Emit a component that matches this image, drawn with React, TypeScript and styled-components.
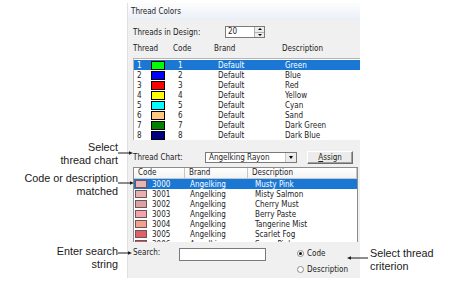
import React from 'react';
import styled, { createGlobalStyle } from 'styled-components';

const Global = createGlobalStyle`
  html, body { margin: 0; padding: 0; background: #fff; }
  body { width: 455px; height: 295px; overflow: hidden; }
`;

const uiFont = `"Liberation Sans Narrow", "DejaVu Sans Condensed", "Liberation Sans", Arial, sans-serif`;
const noteFont = `"Liberation Sans", Arial, sans-serif`;
const selBlue = '#1a78d4';

const Page = styled.div`
  position: relative;
  width: 455px;
  height: 295px;
  box-sizing: border-box;
  padding: 3px 0 0 127px;
  background: #fff;
`;

const Panel = styled.section`
  width: 233px;
  height: 275px;
  box-sizing: border-box;
  background: #f0f0f0;
  border-left: 1px solid #e0e0e0;
  display: flex;
  flex-direction: column;
  overflow: hidden;
  font-family: ${uiFont};
  font-size: 8px;
  color: #222;
`;

const TitleBar = styled.header`
  flex: 0 0 17px;
  display: flex;
  align-items: center;
  padding-left: 3px;
  background: linear-gradient(to bottom, #fdfdfe, #eaeff7);
`;

const DesignRow = styled.div`
  margin-top: 6px;
  height: 12px;
  padding-left: 5px;
  display: grid;
  grid-template-columns: 92px 40px;
  align-items: center;
  flex-shrink: 0;
`;

const SpinBox = styled.div`
  height: 12px;
  box-sizing: border-box;
  border: 1px solid #7a7a7a;
  background: #fff;
  display: flex;
`;

const SpinValue = styled.span`
  flex: 1;
  padding-left: 2px;
  line-height: 10px;
`;

const SpinButtons = styled.div`
  width: 9px;
  display: flex;
  flex-direction: column;
  border-left: 1px solid #b0b0b0;
  background: #ececec;
`;

const SpinHalf = styled.div<{ $down?: boolean }>`
  flex: 1;
  display: flex;
  align-items: center;
  justify-content: center;
  border-top: ${p => (p.$down ? '1px solid #b0b0b0' : 'none')};
  &::after {
    content: '';
    border-left: 2px solid transparent;
    border-right: 2px solid transparent;
    ${p => (p.$down ? 'border-top: 2px solid #000;' : 'border-bottom: 2px solid #000;')}
  }
`;

const ColumnHeader = styled.div`
  margin-top: 5px;
  height: 10px;
  padding-left: 5px;
  display: grid;
  grid-template-columns: 40px 41px 68px auto;
  align-items: center;
  flex-shrink: 0;
`;

const ThreadList = styled.div`
  margin: 5px 0 0 5px;
  width: 240px;
  height: 82px;
  box-sizing: border-box;
  border-top: 1px solid #b4b4b4;
  border-left: 1px solid #b4b4b4;
  padding-top: 1px;
  background: #fff;
  flex-shrink: 0;
`;

const ThreadRow = styled.div<{ $selected?: boolean }>`
  height: 10px;
  padding-left: 3px;
  display: grid;
  grid-template-columns: 14px 27px 40px 67px 1fr;
  align-items: center;
  background: ${p => (p.$selected ? selBlue : 'transparent')};
  color: ${p => (p.$selected ? '#fff' : '#222')};
`;

const Swatch = styled.span<{ $color: string; $w: number; $h: number; $border: string }>`
  display: block;
  width: ${p => p.$w}px;
  height: ${p => p.$h}px;
  box-sizing: border-box;
  border: 1px solid ${p => p.$border};
  background: ${p => p.$color};
`;

const ChartRow = styled.div`
  margin-top: 11px;
  height: 13px;
  padding-left: 5px;
  display: flex;
  align-items: center;
  flex-shrink: 0;
`;

const ChartLabel = styled.span`
  width: 72px;
`;

const Combo = styled.div`
  width: 92px;
  height: 11px;
  box-sizing: border-box;
  border: 1px solid #7a7a7a;
  background: #fff;
  display: flex;
  align-items: center;
`;

const ComboText = styled.span`
  flex: 1;
  padding-left: 3px;
`;

const ComboArrow = styled.span`
  width: 10px;
  height: 100%;
  display: flex;
  align-items: center;
  justify-content: center;
  background: #ececec;
  border-left: 1px solid #c8c8c8;
  &::after {
    content: '';
    border-left: 2.5px solid transparent;
    border-right: 2.5px solid transparent;
    border-top: 3px solid #000;
  }
`;

const AssignButton = styled.button`
  margin-left: 10px;
  width: 46px;
  height: 13px;
  padding: 0;
  box-sizing: border-box;
  font: inherit;
  color: #222;
  background: #ececec;
  border: 1px solid;
  border-color: #fff #6e6e6e #6e6e6e #fff;
  box-shadow: inset -1px -1px 0 #a0a0a0;
  line-height: 10px;
  u { text-decoration: underline; }
`;

const LowerList = styled.div`
  margin: 3px 2px 0 5px;
  height: 75px;
  box-sizing: border-box;
  border: 1px solid #8c8c8c;
  border-bottom: none;
  background: #fff;
  overflow: hidden;
  flex-shrink: 0;
`;

const ListHeader = styled.div`
  display: grid;
  grid-template-columns: 51px 63px 1fr;
  height: 11px;
`;

const HeaderCell = styled.div`
  box-sizing: border-box;
  padding-left: 4px;
  border-right: 1px solid #c6c6c6;
  border-bottom: 1px solid #c6c6c6;
  background: linear-gradient(to bottom, #ffffff, #f3f3f3);
  line-height: 10px;
`;

const ChartRowItem = styled.div<{ $selected?: boolean }>`
  height: 10px;
  display: grid;
  grid-template-columns: 18px 38px 65px 1fr;
  align-items: center;
  background: ${p => (p.$selected ? selBlue : 'transparent')};
  color: ${p => (p.$selected ? '#fff' : '#222')};
  & > span:first-child { margin-left: 1px; }
`;

const SearchArea = styled.div`
  flex: 1;
  display: grid;
  grid-template-columns: 46px 87px 1fr;
  align-items: start;
  padding: 5px 0 0 5px;
`;

const SearchLabel = styled.span`
  line-height: 12px;
`;

const SearchInput = styled.div`
  margin-top: 1px;
  height: 13px;
  box-sizing: border-box;
  border: 1px solid #7a7a7a;
  background: #fff;
`;

const RadioGroup = styled.div`
  margin-left: 31px;
  display: flex;
  flex-direction: column;
  gap: 4px;
`;

const RadioOption = styled.label`
  height: 12px;
  display: flex;
  align-items: center;
  gap: 3px;
`;

const RadioCircle = styled.span<{ $checked?: boolean }>`
  width: 7px;
  height: 7px;
  box-sizing: border-box;
  border-radius: 50%;
  border: 1px solid #8a8a8a;
  background: #fff;
  display: flex;
  align-items: center;
  justify-content: center;
  &::after {
    content: '';
    width: 3px;
    height: 3px;
    border-radius: 50%;
    background: ${p => (p.$checked ? '#111' : 'transparent')};
  }
`;

const Note = styled.div<{ $top: number; $left?: number; $right?: number }>`
  position: absolute;
  top: ${p => p.$top}px;
  ${p => (p.$left !== undefined ? `left: ${p.$left}px;` : '')}
  ${p => (p.$right !== undefined ? `right: ${p.$right}px; text-align: right;` : '')}
  font-family: ${noteFont};
  font-size: 10.8px;
  line-height: 13px;
  color: #1a1a1a;
  white-space: nowrap;
`;

const Connector = styled.svg<{ $top: number; $left: number }>`
  position: absolute;
  top: ${p => p.$top}px;
  left: ${p => p.$left}px;
  overflow: visible;
`;

type Thread = { n: number; color: string; desc: string };
const threads: Thread[] = [
  { n: 1, color: '#00ff00', desc: 'Green' },
  { n: 2, color: '#0000ff', desc: 'Blue' },
  { n: 3, color: '#ff0000', desc: 'Red' },
  { n: 4, color: '#ffff00', desc: 'Yellow' },
  { n: 5, color: '#00ffff', desc: 'Cyan' },
  { n: 6, color: '#ffc880', desc: 'Sand' },
  { n: 7, color: '#008000', desc: 'Dark Green' },
  { n: 8, color: '#000080', desc: 'Dark Blue' },
];

type ChartItem = { code: string; color: string; desc: string };
const chart: ChartItem[] = [
  { code: '3000', color: '#eab4b4', desc: 'Musty Pink' },
  { code: '3001', color: '#eaaeae', desc: 'Misty Salmon' },
  { code: '3002', color: '#dca2a2', desc: 'Cherry Must' },
  { code: '3003', color: '#f4a2ac', desc: 'Berry Paste' },
  { code: '3004', color: '#f4a090', desc: 'Tangerine Mist' },
  { code: '3005', color: '#e2606a', desc: 'Scarlet Fog' },
  { code: '3006', color: '#d05a60', desc: 'Scary Pink' },
];

function RightArrow({ top, left, width }: { top: number; left: number; width: number }) {
  return (
    <Connector $top={top - 3} $left={left} width={width} height={6}>
      <line x1={0} y1={3} x2={width - 3} y2={3} stroke="#1a1a1a" strokeWidth={1} />
      <polygon points={`${width - 4},1.3 ${width},3 ${width - 4},4.7`} fill="#1a1a1a" />
    </Connector>
  );
}

function LeftArrow({ top, left, width }: { top: number; left: number; width: number }) {
  return (
    <Connector $top={top - 3} $left={left} width={width} height={6}>
      <line x1={3} y1={3} x2={width} y2={3} stroke="#1a1a1a" strokeWidth={1} />
      <polygon points={`4,1.3 0,3 4,4.7`} fill="#1a1a1a" />
    </Connector>
  );
}

export default function App() {
  return (
    <Page>
      <Global />
      <Panel>
        <TitleBar>Thread Colors</TitleBar>
        <DesignRow>
          <span>Threads in Design:</span>
          <SpinBox>
            <SpinValue>20</SpinValue>
            <SpinButtons>
              <SpinHalf />
              <SpinHalf $down />
            </SpinButtons>
          </SpinBox>
        </DesignRow>
        <ColumnHeader>
          <span>Thread</span>
          <span>Code</span>
          <span>Brand</span>
          <span>Description</span>
        </ColumnHeader>
        <ThreadList>
          {threads.map(t => (
            <ThreadRow key={t.n} $selected={t.n === 1}>
              <span>{t.n}</span>
              <span>
                <Swatch $color={t.color} $w={14} $h={9} $border="#000" />
              </span>
              <span>{t.n}</span>
              <span>Default</span>
              <span>{t.desc}</span>
            </ThreadRow>
          ))}
        </ThreadList>
        <ChartRow>
          <ChartLabel>Thread Chart:</ChartLabel>
          <Combo>
            <ComboText>Angelking Rayon</ComboText>
            <ComboArrow />
          </Combo>
          <AssignButton type="button">
            <u>A</u>ssign
          </AssignButton>
        </ChartRow>
        <LowerList>
          <ListHeader>
            <HeaderCell>Code</HeaderCell>
            <HeaderCell>Brand</HeaderCell>
            <HeaderCell>Description</HeaderCell>
          </ListHeader>
          {chart.map((c, i) => (
            <ChartRowItem key={c.code} $selected={i === 0}>
              <span>
                <Swatch $color={c.color} $w={12} $h={8} $border="#6a5656" />
              </span>
              <span>{c.code}</span>
              <span>Angelking</span>
              <span>{c.desc}</span>
            </ChartRowItem>
          ))}
        </LowerList>
        <SearchArea>
          <SearchLabel>Search:</SearchLabel>
          <SearchInput />
          <RadioGroup>
            <RadioOption>
              <RadioCircle $checked />
              Code
            </RadioOption>
            <RadioOption>
              <RadioCircle />
              Description
            </RadioOption>
          </RadioGroup>
        </SearchArea>
      </Panel>

      <Note $top={141} $right={337}>
        Select
        <br />
        thread chart
      </Note>
      <RightArrow top={153} left={118} width={15} />

      <Note $top={172} $right={337}>
        Code or description
        <br />
        matched
      </Note>
      <RightArrow top={183} left={118} width={16} />

      <Note $top={245} $right={337}>
        Enter search
        <br />
        string
      </Note>
      <RightArrow top={253} left={118} width={14} />

      <Note $top={247} $left={370}>
        Select thread
        <br />
        criterion
      </Note>
      <LeftArrow top={258} left={347} width={21} />
    </Page>
  );
}
